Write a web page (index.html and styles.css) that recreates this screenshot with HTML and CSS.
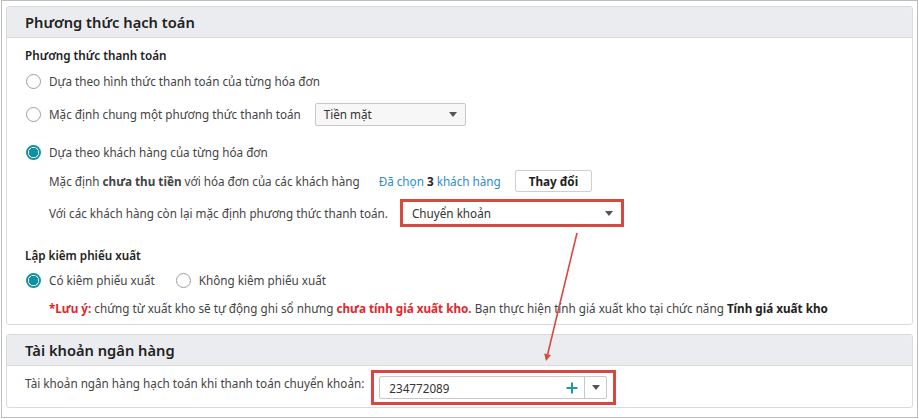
FILE: index.html
```html
<!DOCTYPE html>
<html lang="vi">
<head>
    <meta charset="UTF-8">
    <meta name="viewport" content="width=device-width, initial-scale=1.0">
    <title>Phương thức hạch toán</title>
    <link rel="stylesheet" href="styles.css">
</head>
<body>
    <div class="frame">
        <div class="panel">
            <div class="panel-head">Phương thức hạch toán</div>
            <div class="panel-body">
                <div class="group-title">Phương thức thanh toán</div>

                <label class="opt opt-first"><span class="radio"></span>Dựa theo hình thức thanh toán của từng hóa đơn</label>

                <div class="opt opt-second">
                    <span class="radio"></span>
                    <span>Mặc định chung một phương thức thanh toán</span>
                    <div class="select select-cash">Tiền mặt<span class="caret"></span></div>
                </div>

                <label class="opt opt-third"><span class="radio checked"></span>Dựa theo khách hàng của từng hóa đơn</label>

                <div class="sub sub-customers">
                    <span>Mặc định <b>chưa thu tiền</b> với hóa đơn của các khách hàng</span>
                    <a class="link" href="#">Đã chọn <b>3</b> khách hàng</a>
                    <button class="btn">Thay đổi</button>
                </div>

                <div class="sub sub-rest">
                    <span>Với các khách hàng còn lại mặc định phương thức thanh toán.</span>
                    <div class="select select-transfer highlight">Chuyển khoản<span class="caret"></span></div>
                </div>

                <div class="group-title group-export">Lập kiêm phiếu xuất</div>
                <div class="opt opt-inline">
                    <label class="choice"><span class="radio checked"></span>Có kiêm phiếu xuất</label>
                    <label class="choice"><span class="radio"></span>Không kiêm phiếu xuất</label>
                </div>

                <div class="sub note">
                    <span><b class="warn">*Lưu ý:</b> chứng từ xuất kho sẽ tự động ghi sổ nhưng <b class="warn">chưa tính giá xuất kho.</b> Bạn thực hiện tính giá xuất kho tại chức năng <b class="dark">Tính giá xuất kho</b></span>
                </div>
            </div>
        </div>

        <div class="panel panel-bank">
            <div class="panel-head">Tài khoản ngân hàng</div>
            <div class="panel-body bank-body">
                <span class="bank-label">Tài khoản ngân hàng hạch toán khi thanh toán chuyển khoản:</span>
                <div class="highlight-box">
                    <div class="combo">
                        <span class="combo-value">234772089</span>
                        <span class="combo-add">
                            <svg width="12" height="12" viewBox="0 0 12 12"><path d="M6 0.5v11M0.5 6h11" stroke="#1d97a3" stroke-width="2"/></svg>
                        </span>
                        <span class="combo-drop"><span class="caret"></span></span>
                    </div>
                </div>
            </div>
        </div>

        <!-- pointer from the payment select down to the bank account -->
        <svg class="pointer" width="919" height="419" viewBox="0 0 919 419">
            <line x1="577" y1="233" x2="547.6" y2="354.5" stroke="#d8483f" stroke-width="1.6"/>
            <polygon points="546,361 551,355 544.2,353.4" fill="#d8483f"/>
        </svg>
    </div>
</body>
</html>
```
FILE: styles.css
```css
body {
    margin: 0;
    font-family: "Noto Sans", "Open Sans", sans-serif;
    font-size: 11.7px;
    color: #444;
    background-color: #fff;
}

.frame {
    position: relative;
    box-sizing: border-box;
    width: 917px;
    height: 418px;
    margin-left: 1px;
    padding: 5px 4px 0;
    border: 1px solid #bdbdbd;
}

.panel {
    border: 1px solid #dadada;
    border-radius: 3px;
}

.panel-bank {
    margin-top: 9px;
}

.panel-head {
    height: 30px;
    line-height: 30px;
    padding-left: 18px;
    background-color: #ebecf0;
    border-bottom: 1px solid #dadada;
    border-radius: 3px 3px 0 0;
    font-size: 14.7px;
    font-weight: 600;
    color: #222;
}

.panel-body {
    padding: 6px 18px 5px;
}

.group-title {
    height: 22px;
    line-height: 22px;
    font-weight: 600;
    color: #222;
}

.group-export {
    margin-top: 17px;
}

/* radio rows */
.opt {
    display: flex;
    align-items: center;
    height: 24px;
    padding-left: 1px;
}

.opt-first {
    height: 26px;
    margin-top: 2px;
}

.opt-second {
    margin-top: 8px;
}

.opt-third {
    margin-top: 14px;
}

.opt-inline {
    margin-top: 2px;
}

.choice {
    display: flex;
    align-items: center;
    margin-right: 21px;
}

.radio {
    box-sizing: border-box;
    flex: none;
    width: 15px;
    height: 15px;
    margin-right: 8px;
    border: 1px solid #9e9e9e;
    border-radius: 50%;
    background-color: #fff;
}

.radio.checked {
    border: 2px solid #12909f;
    background: radial-gradient(circle, #12909f 0 4.5px, #fff 5px);
}

/* indented rows under the third option */
.sub {
    display: flex;
    align-items: center;
    height: 22px;
    padding-left: 24px;
}

.sub-customers {
    margin-top: 6px;
}

.sub-rest {
    height: 28px;
    margin-top: 7px;
}

.note {
    margin-top: 5px;
}

.link {
    margin-left: 19px;
    color: #2e8bd0;
    text-decoration: none;
}

.link b {
    color: #222;
}

.btn {
    height: 22px;
    margin-left: 14px;
    padding: 0 13px;
    border: 1px solid #cfcfcf;
    border-radius: 2px;
    background-color: #fff;
    font-family: inherit;
    font-size: 11.7px;
    font-weight: 700;
    color: #222;
}

.select {
    position: relative;
    box-sizing: border-box;
    display: flex;
    align-items: center;
    border: 1px solid #c8c8c8;
    border-radius: 2px;
    color: #333;
}

.select-cash {
    width: 151px;
    height: 23px;
    margin-left: 14px;
    padding-left: 8px;
    background-color: #f7f7f7;
}

.select-transfer {
    width: 224px;
    height: 28px;
    margin-left: 12px;
    padding-left: 9px;
    background-color: #fff;
}

.highlight {
    border: 3px solid #d8483f;
    border-radius: 0;
}

.caret {
    width: 0;
    height: 0;
    border-left: 4px solid transparent;
    border-right: 4px solid transparent;
    border-top: 5px solid #555;
}

.select .caret {
    position: absolute;
    right: 8px;
    top: 50%;
    margin-top: -2px;
}

.warn {
    color: #e3262b;
}

.dark {
    color: #222;
}

/* bank account */
.bank-body {
    display: flex;
    align-items: flex-start;
    padding: 4px 18px 2px;
}

.bank-label {
    margin-top: 4px;
    line-height: 18px;
}

.highlight-box {
    box-sizing: border-box;
    width: 245px;
    height: 35px;
    margin-left: 7px;
    padding: 3px 6px 4px 5px;
    border: 3px solid #d8483f;
}

.combo {
    box-sizing: border-box;
    display: flex;
    align-items: center;
    height: 23px;
    border: 1px solid #c8c8c8;
    border-radius: 2px;
    color: #333;
}

.combo-value {
    flex: 1;
    padding-left: 9px;
}

.combo-add {
    display: flex;
    padding-right: 6px;
}

.combo-drop {
    display: flex;
    align-items: center;
    justify-content: center;
    width: 21px;
    height: 100%;
    border-left: 1px solid #c8c8c8;
}

.pointer {
    position: absolute;
    left: -2px;
    top: -1px;
    pointer-events: none;
}
```
